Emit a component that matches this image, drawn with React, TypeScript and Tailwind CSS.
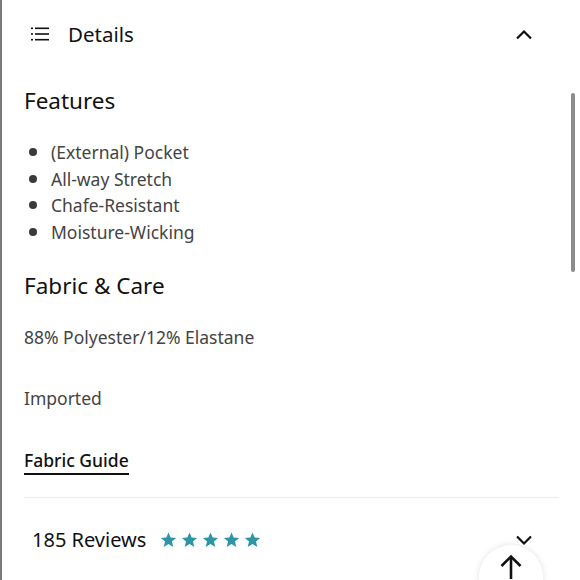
import React from 'react';

const font = { fontFamily: '"Noto Sans", "Open Sans", sans-serif' };

const ListIcon = () => (
    <svg width="18" height="14" viewBox="0 0 18 14" className="shrink-0">
        <rect x="0" y="0.5" width="2" height="1.6" fill="#111" />
        <rect x="4" y="0.5" width="14" height="1.6" fill="#111" />
        <rect x="0" y="6.2" width="2" height="1.6" fill="#111" />
        <rect x="4" y="6.2" width="14" height="1.6" fill="#111" />
        <rect x="0" y="11.9" width="2" height="1.6" fill="#111" />
        <rect x="4" y="11.9" width="14" height="1.6" fill="#111" />
    </svg>
);

const Chevron = ({ up }: { up?: boolean }) => (
    <svg width="18" height="11" viewBox="0 0 18 11" fill="none" stroke="#111" strokeWidth="2.2">
        {up ? <path d="M2 9.5 L9 2.5 L16 9.5" /> : <path d="M2 1.5 L9 8.5 L16 1.5" />}
    </svg>
);

const Star = () => (
    <svg width="17" height="16" viewBox="0 0 24 23">
        <path d="M12 0.8 L15.1 8 L23 8.6 L17 13.8 L18.9 21.6 L12 17.4 L5.1 21.6 L7 13.8 L1 8.6 L8.9 8 Z" fill="#2e95a7" />
    </svg>
);

const features = ['(External) Pocket', 'All-way Stretch', 'Chafe-Resistant', 'Moisture-Wicking'];

export default function App() {
    return (
        <div className="relative w-[580px] h-[580px] overflow-hidden bg-white border-l-2 border-[#7a7a7a]" style={font}>
            <div className="absolute right-[5px] top-[93px] w-[4px] h-[179px] rounded-full bg-[#8c8c8c]" />

            <div className="flex items-center justify-between pl-[29px] pr-[47px] pt-[21px] h-[47px]">
                <div className="flex items-center gap-[19px]">
                    <ListIcon />
                    <span className="text-[20.5px] text-[#111] leading-none">Details</span>
                </div>
                <Chevron up />
            </div>

            <div className="pl-[22px] pr-[21px]">
                <h2 className="mt-[39px] text-[22.5px] text-[#111] leading-[30px]">Features</h2>
                <ul className="mt-[23px] flex flex-col">
                    {features.map((f) => (
                        <li key={f} className="flex items-center h-[26.5px] text-[17.5px] text-[#444]">
                            <span className="w-[8px] h-[8px] rounded-full bg-[#3a3a3a] ml-[5px] mr-[14px]" />
                            {f}
                        </li>
                    ))}
                </ul>

                <h2 className="mt-[26px] text-[22.5px] text-[#111] leading-[30px]">Fabric &amp; Care</h2>
                <p className="mt-[24px] text-[17.5px] text-[#444] leading-[24px]">88% Polyester/12% Elastane</p>
                <p className="mt-[37px] text-[17.5px] text-[#444] leading-[24px]">Imported</p>
                <div className="mt-[38px]">
                    <span className="inline-block text-[17.5px] font-medium text-[#111] leading-[24px] border-b-2 border-[#111] pb-[1px]">
                        Fabric Guide
                    </span>
                </div>

                <div className="mt-[22px] border-t border-[#ececec]" />

                <div className="flex items-center justify-between pl-[8px] pr-[26px] pt-[32px]">
                    <div className="flex items-center gap-[14px]">
                        <span className="text-[20px] text-[#111] leading-none">185 Reviews</span>
                        <div className="flex gap-[4px]">
                            <Star /><Star /><Star /><Star /><Star />
                        </div>
                    </div>
                    <Chevron />
                </div>
            </div>

            <button className="absolute left-[477px] top-[545px] w-[64px] h-[64px] rounded-full bg-white shadow-[0_0_6px_rgba(0,0,0,0.12)] flex justify-center pt-[9px]">
                <svg width="24" height="26" viewBox="0 0 24 26" fill="none" stroke="#111" strokeWidth="2.6">
                    <path d="M12 25 V3" />
                    <path d="M2.5 12 L12 2.5 L21.5 12" />
                </svg>
            </button>
        </div>
    );
}
